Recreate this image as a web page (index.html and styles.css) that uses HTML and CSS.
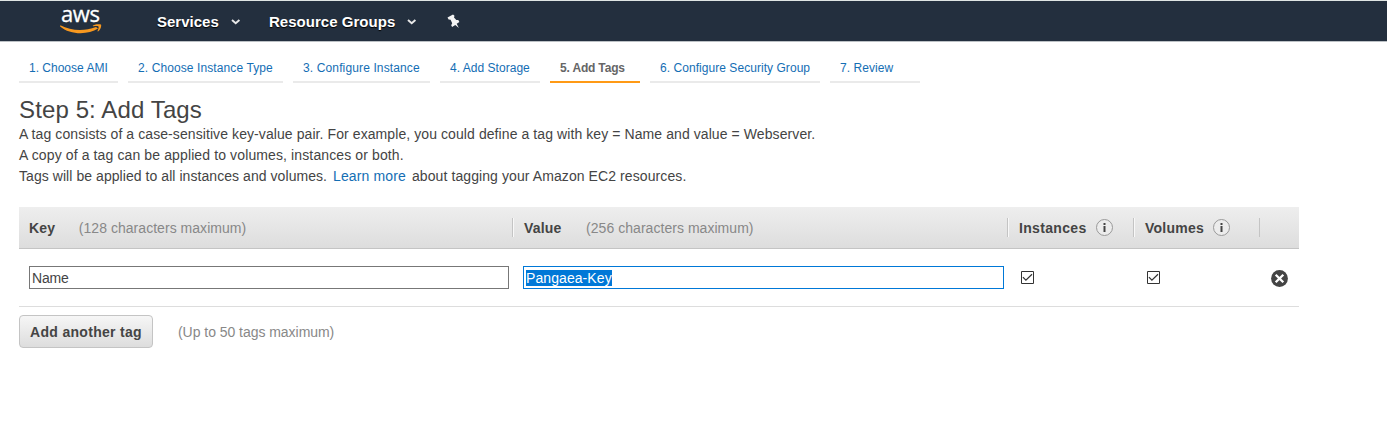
FILE: index.html
```html
<!DOCTYPE html>
<html lang="en">
<head>
<meta charset="utf-8">
<title>Step 5: Add Tags</title>
<link rel="stylesheet" href="styles.css">
</head>
<body>
<header class="topbar">
  <div class="logo">
    <span class="logo-text">aws</span>
    <svg class="smile" width="42" height="11" viewBox="0 0 42 11"><path d="M.3 1.300C11 6.800 24 7.600 36 3L38 4.600C28 11 10 11 .1 2.400Z" fill="#f7981f"/><path d="M33 1.400C35.500-.1 39.500-.1 41 .6c.7 1.800-.7 5.200-2.700 6.600-.6.400-.9.100-.7-.5.700-1.700 1.400-3.300.9-4.300-.9-.6-3.300-.4-5.200-.2-.6.100-.8-.4-.3-.8Z" fill="#f7981f"/></svg>
  </div>
  <nav class="menu">
    <a class="menu-item services">Services</a>
    <svg class="chev" width="10" height="6" viewBox="0 0 10 6"><path d="M1 1l3.700 3.300L8.400 1" fill="none" stroke="#e8e8e8" stroke-width="1.900"/></svg>
    <a class="menu-item groups">Resource Groups</a>
    <svg class="chev" width="10" height="6" viewBox="0 0 10 6"><path d="M1 1l3.700 3.300L8.400 1" fill="none" stroke="#e8e8e8" stroke-width="1.900"/></svg>
    <svg class="pin" width="14" height="15" viewBox="0 0 14 15"><path d="M.5 3.500L6 .4l1.500 1.300-.5 1.700 2.300 2.700 2-.1 1.100 1.900-2.700 1.900 2.200 4.200-3.600-3.100-3.200 2.200-.9-1.900 1-2-1.600-3.400-2-.3Z" fill="#f5f5f5"/></svg>
  </nav>
</header>
<main class="page">
  <ol class="tabs">
    <li class="tab t1">1. Choose AMI</li>
    <li class="tab t2">2. Choose Instance Type</li>
    <li class="tab t3">3. Configure Instance</li>
    <li class="tab t4">4. Add Storage</li>
    <li class="tab t5 active">5. Add Tags</li>
    <li class="tab t6">6. Configure Security Group</li>
    <li class="tab t7">7. Review</li>
  </ol>
  <h1 class="title">Step 5: Add Tags</h1>
  <p class="intro"><span class="l1">A tag consists of a case-sensitive key-value pair. For example, you could define a tag with key = Name and value = Webserver.</span><br><span class="l2">A copy of a tag can be applied to volumes, instances or both.</span><br><span class="l3">Tags will be applied to all instances and volumes.</span> <a class="link">Learn more</a> <span class="l4">about tagging your Amazon EC2 resources.</span></p>
  <section class="table">
    <div class="row head">
      <div class="cell"><b>Key</b><span class="hint key-hint">(128 characters maximum)</span></div>
      <div class="cell"><b>Value</b><span class="hint value-hint">(256 characters maximum)</span></div>
      <div class="cell"><b class="instances">Instances</b><svg class="info" width="18" height="18" viewBox="0 0 18 18"><circle cx="8.500" cy="8.500" r="8" fill="#ececec" stroke="#999"/><path d="M7.500 4h2v2h-2zM7.500 7h2v6h-2z" fill="#444"/></svg></div>
      <div class="cell"><b class="volumes">Volumes</b><svg class="info" width="18" height="18" viewBox="0 0 18 18"><circle cx="8.500" cy="8.500" r="8" fill="#ececec" stroke="#999"/><path d="M7.500 4h2v2h-2zM7.500 7h2v6h-2z" fill="#444"/></svg></div>
      <div class="cell"></div>
    </div>
    <div class="row body">
      <div class="field"><span class="field-text name">Name</span></div>
      <div class="field focus"><span class="field-text selected">Pangaea-Key</span></div>
      <svg class="check" width="13" height="13" viewBox="0 0 13 13"><path d="M.5.5h12v12H.5z" fill="#fff" stroke="#333"/><path d="M1.900 6.200l3 3L11 3.300" fill="none" stroke="#333" stroke-width="1.200"/></svg>
      <svg class="check" width="13" height="13" viewBox="0 0 13 13"><path d="M.5.5h12v12H.5z" fill="#fff" stroke="#333"/><path d="M1.900 6.200l3 3L11 3.300" fill="none" stroke="#333" stroke-width="1.200"/></svg>
      <svg class="remove" width="17" height="17" viewBox="0 0 17 17"><circle cx="8.500" cy="8.500" r="8.400" fill="#444"/><path d="M4.700 4.700l7.600 7.600M12.300 4.700l-7.600 7.600" stroke="#fff" stroke-width="2.300"/></svg>
    </div>
  </section>
  <div class="actions"><button class="add">Add another tag</button><span class="hint limit">(Up to 50 tags maximum)</span></div>
</main>
</body>
</html>
```
FILE: styles.css
```css
* { box-sizing: border-box; }
body { margin: 0; background: #fff; color: #444; font: 14px/21px "Liberation Sans", Arial, sans-serif; white-space: nowrap; overflow: hidden; }
svg { display: block; flex: none; }
.topbar { height: 42px; border-top: 1px solid #dfe5e3; border-bottom: 1px solid #bcc1c5; background: #232f3e; display: flex; padding-left: 60px; }
.logo { width: 97px; height: 40px; padding-top: 5px; }
.logo-text { display: block; height: 18px; padding-left: 1px; font: 500 22px/14px "Open Sans", sans-serif; letter-spacing: -.4px; color: #fff; -webkit-text-stroke: .3px #fff; }
.menu { display: flex; align-items: center; height: 40px; color: #fff; font-size: 15px; font-weight: bold; }
.menu-item { text-shadow: 0 1px 1px #000; }
.services { width: 74px; }
.groups { width: 138px; margin-left: 28px; letter-spacing: .03px; }
.chev { margin-top: 2px; }
.pin { margin-left: 30px; }
.page { padding: 18px 0 0 19px; }
.tabs { display: flex; gap: 10px; margin: 0; padding: 0; list-style: none; }
.tab { height: 23px; padding-left: 10px; border-bottom: 2px solid #eaeaea; color: #146eb4; font-size: 12px; line-height: 16px; }
.active { border-color: #ff9a15; color: #666; font-weight: bold; }
.t1 { width: 99px; }
.t2 { width: 155px; letter-spacing: .1px; }
.t3 { width: 137px; letter-spacing: .13px; }
.t4 { width: 100px; letter-spacing: .03px; }
.t5 { width: 90px; letter-spacing: -.17px; }
.t6 { width: 170px; letter-spacing: .05px; }
.t7 { width: 90px; letter-spacing: .06px; }
.title { margin: 12px 0 0; height: 29px; font-size: 24px; line-height: 30px; font-weight: normal; letter-spacing: .12px; }
.intro { margin: 0; }
.l1 { letter-spacing: .084px; }
.l2 { letter-spacing: .12px; }
.l3 { letter-spacing: .06px; }
.l4 { letter-spacing: .09px; }
.link { color: #146eb4; margin: 0 2px; letter-spacing: .15px; }
.table { width: 1280px; margin-top: 20px; }
.row { display: grid; }
.head { grid-template-columns: 494px 495px 126px 126px 39px; height: 42px; align-items: center; border-bottom: 1px solid #c4c4c4; background: linear-gradient(#eee, #ddd); }
.cell { display: flex; align-items: center; height: 19px; padding-left: 10px; border-right: 1px solid #c4c4c4; box-shadow: 1px 0 #f8f8f8; }
.cell + .cell { padding-left: 11px; }
.cell:last-child { border: 0; box-shadow: none; }
.cell:nth-child(4) { box-shadow: none; }
.cell b, .cell .hint { padding-top: 2px; }
.cell b { letter-spacing: .2px; }
.cell .instances { width: 68px; letter-spacing: .33px; }
.cell .volumes { width: 59px; letter-spacing: .25px; }
.hint { color: #888; }
.key-hint { margin-left: 23.500px; letter-spacing: .04px; }
.value-hint { margin-left: 24.500px; letter-spacing: .04px; }
.info { margin-left: 9px; }
.body { grid-template-columns: 494px 498px 126px 117px 17px; height: 58px; padding-left: 10px; align-items: center; border-bottom: 1px solid #ddd; }
.field { width: 480px; height: 23px; padding: 3px 2px 2px; border: 1px solid #777; line-height: 16px; }
.focus { width: 481px; border-color: #0078d7; }
.field-text { display: inline-block; height: 16px; line-height: 16px; vertical-align: top; }
.name { letter-spacing: -.2px; }
.selected { background: #0078d7; color: #fff; letter-spacing: .08px; }
.remove { margin: 2px 0 0 7px; }
.actions { display: flex; align-items: center; margin-top: 8px; }
.add { width: 134px; height: 33px; padding: 0; border: 1px solid #c4c4c4; border-radius: 4px; background: linear-gradient(#f6f6f6, #ddd); color: #444; font: bold 14px/20px "Liberation Sans", Arial, sans-serif; letter-spacing: .3px; }
.limit { margin-left: 25px; padding-top: 2px; letter-spacing: -.04px; }
```
